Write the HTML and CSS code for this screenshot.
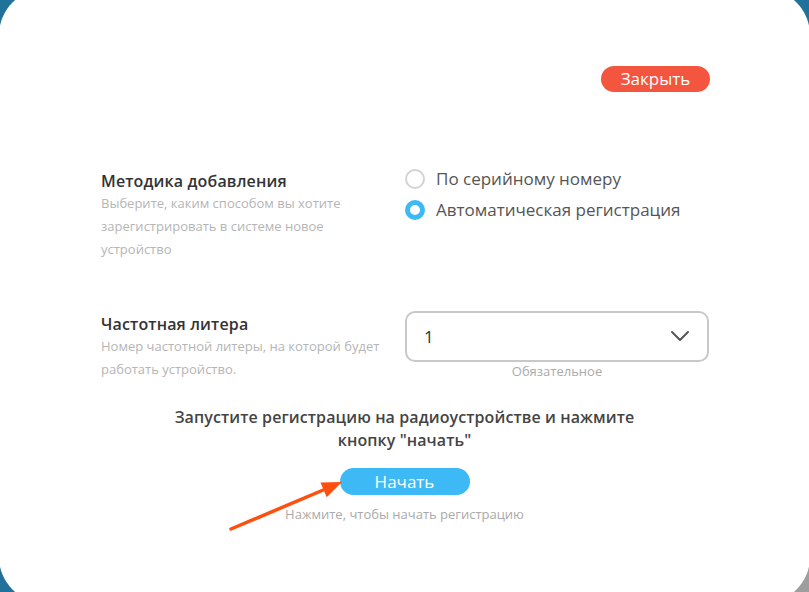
FILE: index.html
```html
<!DOCTYPE html>
<html lang="ru">
<head>
<meta charset="utf-8">
<title>Добавление устройства</title>
<link rel="stylesheet" href="styles.css">
</head>
<body>
<div class="card">
  <div class="topbar">
    <button class="btn-close">Закрыть</button>
  </div>

  <div class="row row-method">
    <div class="info">
      <div class="label">Методика добавления</div>
      <div class="desc">Выберите, каким способом вы хотите зарегистрировать в системе новое устройство</div>
    </div>
    <div class="control">
      <div class="radio"><span class="dot"></span><span class="radio-text">По серийному номеру</span></div>
      <div class="radio"><span class="dot on"></span><span class="radio-text">Автоматическая регистрация</span></div>
    </div>
  </div>

  <div class="row row-freq">
    <div class="info">
      <div class="label">Частотная литера</div>
      <div class="desc">Номер частотной литеры, на которой будет работать устройство.</div>
    </div>
    <div class="control">
      <div class="select">
        <span class="select-value">1</span>
        <svg class="chev" width="20" height="12" viewBox="0 0 20 12"><path d="M2 2 L10 10 L18 2" fill="none" stroke="#555" stroke-width="2" stroke-linecap="round" stroke-linejoin="round"/></svg>
      </div>
      <div class="hint">Обязательное</div>
    </div>
  </div>

  <div class="start">
    <p class="start-text">Запустите регистрацию на радиоустройстве и нажмите кнопку "начать"</p>
    <button class="btn-start">Начать</button>
    <div class="start-hint">Нажмите, чтобы начать регистрацию</div>
  </div>

  <svg class="arrow" width="809" height="592" viewBox="0 0 809 592">
    <line x1="231" y1="529" x2="328" y2="488" stroke="#ff4f0f" stroke-width="3.5" stroke-linecap="round"/>
    <polygon points="342,482 320.5,482.4 326.7,497.2" fill="#ff4f0f"/>
  </svg>
</div>
</body>
</html>
```

FILE: styles.css
```css
html, body {
  margin: 0;
  padding: 0;
  height: 100%;
  overflow: hidden;
}
body {
  background: linear-gradient(#9e9e9e, #9e9e9e) right bottom / 60px 60px no-repeat, #21729a;
  font-family: "Open Sans", "Noto Sans", sans-serif;
}
.card {
  position: relative;
  margin: -11px -1px 0 -1px;
  height: 614px;
  box-sizing: border-box;
  background: #fff;
  border-radius: 46px;
  padding-top: 77px;
}
.topbar {
  display: flex;
  justify-content: flex-end;
  padding-right: 100px;
}
.btn-close {
  width: 109px;
  height: 26px;
  border: none;
  border-radius: 13px;
  background: #f4553e;
  color: #fff;
  font-family: inherit;
  font-size: 17px;
  line-height: 26px;
  padding: 0;
}
.row {
  display: grid;
  grid-template-columns: 304px 304px;
  padding-left: 102px;
}
.row-method {
  margin-top: 78px;
}
.row-freq {
  margin-top: 50px;
}
.label {
  font-size: 16px;
  font-weight: 600;
  line-height: 22px;
  color: #333;
  letter-spacing: 0.15px;
}
.row-freq .label {
  margin-top: 2px;
}
.desc {
  font-size: 13px;
  line-height: 23px;
  color: #b5b5b5;
  width: 292px;
}
.control {
  display: flex;
  flex-direction: column;
}
.row-method .control {
  margin-top: -3px;
  gap: 7px;
}
.radio {
  display: flex;
  align-items: center;
  height: 24px;
  gap: 11px;
}
.dot {
  width: 20px;
  height: 20px;
  box-sizing: border-box;
  border-radius: 50%;
  border: 2px solid #d3d3d3;
  background: #fff;
}
.dot.on {
  border: 5px solid #3db9f6;
}
.radio-text {
  font-size: 17px;
  color: #555;
  line-height: 22px;
}
.select {
  height: 51px;
  box-sizing: border-box;
  border: 2px solid #c8c8c8;
  border-radius: 10px;
  display: flex;
  align-items: center;
  justify-content: space-between;
  padding: 0 17px 0 17px;
}
.select-value {
  font-size: 17px;
  color: #333;
}
.chev {
  margin-top: -2px;
}
.hint {
  text-align: center;
  font-size: 13px;
  line-height: 18px;
  color: #aaa;
}
.start {
  display: flex;
  flex-direction: column;
  align-items: center;
  margin-top: 25px;
}
.start-text {
  margin: 0;
  width: 480px;
  text-align: center;
  font-size: 16px;
  font-weight: 600;
  line-height: 23px;
  color: #444;
  letter-spacing: 0.1px;
}
.btn-start {
  margin-top: 16px;
  width: 130px;
  height: 27px;
  border: none;
  border-radius: 14px;
  background: #3db9f6;
  color: #fff;
  font-family: inherit;
  font-size: 17px;
  line-height: 27px;
  padding: 0;
}
.start-hint {
  margin-top: 10px;
  font-size: 13px;
  line-height: 18px;
  color: #aaa;
}
.arrow {
  position: absolute;
  left: 1px;
  top: 11px;
  pointer-events: none;
}
```
